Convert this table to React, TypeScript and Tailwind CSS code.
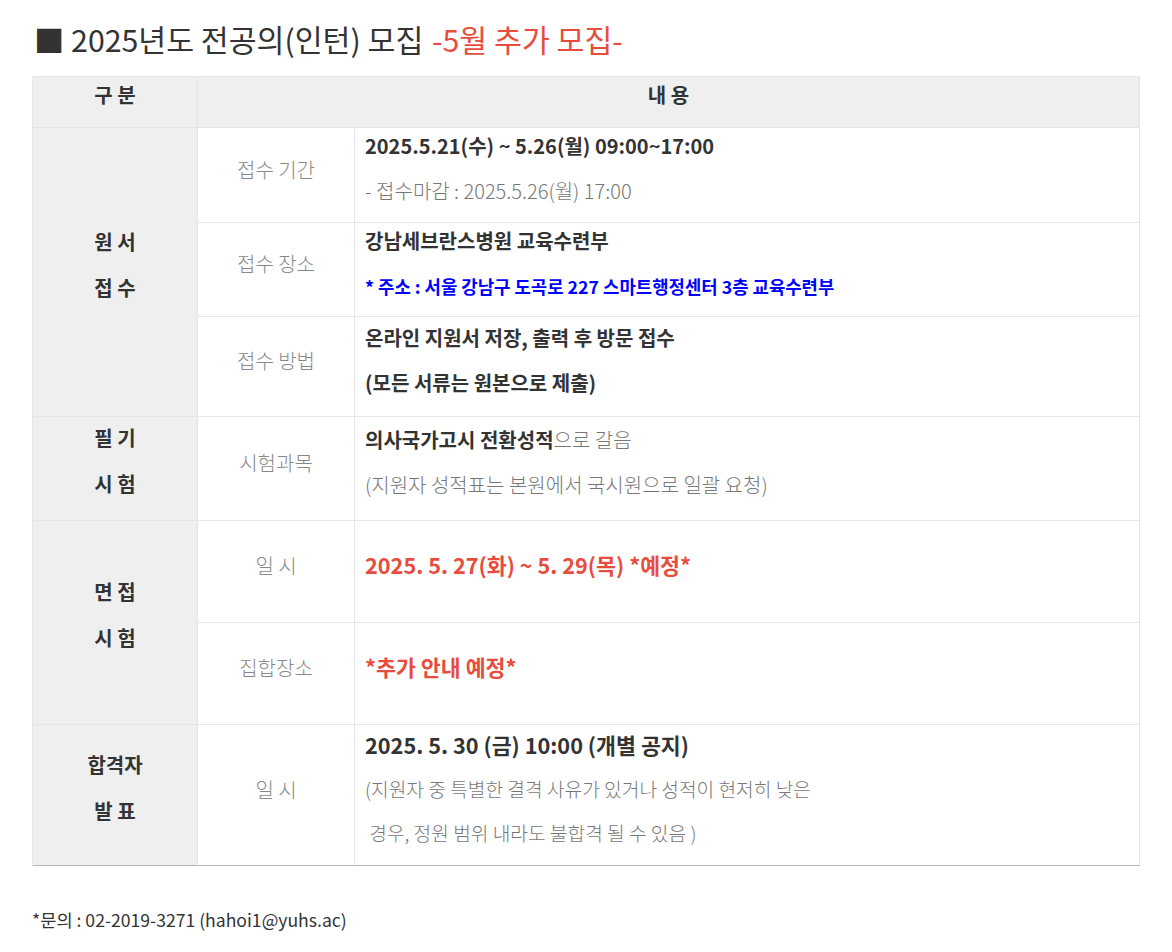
import React from "react"

const font = { fontFamily: '"Noto Sans CJK KR", "Noto Sans", sans-serif' }

function Head({ children, className = "" }: { children: React.ReactNode; className?: string }) {
  return (
    <div
      className={`${className} flex flex-col items-center justify-center pb-[15px] bg-[#efefef] border-r border-b border-[#e4e4e4] text-[20px] font-bold text-[#333] leading-[28px]`}
    >
      {children}
    </div>
  )
}

function Label({ children, last }: { children: React.ReactNode; last?: boolean }) {
  return (
    <div
      className={`flex items-center justify-center pb-[11px] border-r text-[20px] font-light text-[#888] leading-[28px] ${
        last ? "border-b border-b-[#b5b5b5]" : "border-b"
      } border-[#e6e6e6]`}
    >
      {children}
    </div>
  )
}

function Content({ children, last, gap = "gap-[17px]" }: { children: React.ReactNode; last?: boolean; gap?: string }) {
  return (
    <div
      className={`flex flex-col justify-center ${gap} pl-[10px] pb-[13px] border-r text-[20px] leading-[28px] ${
        last ? "border-b border-b-[#b5b5b5]" : "border-b"
      } border-[#e6e6e6]`}
    >
      {children}
    </div>
  )
}

function Group({ lines, span, last }: { lines: string[]; span: string; last?: boolean }) {
  return (
    <div
      className={`${span} flex flex-col items-center justify-center gap-[18px] pb-[15px] bg-[#efefef] border-r text-[20px] font-bold text-[#333] leading-[28px] ${
        last ? "border-b border-b-[#b5b5b5]" : "border-b"
      } border-[#e6e6e6]`}
    >
      {lines.map((l) => (
        <span key={l} className="whitespace-pre">
          {l}
        </span>
      ))}
    </div>
  )
}

export default function App() {
  return (
    <div className="min-h-screen bg-white px-8 pt-[18px]" style={font}>
      {/* 제목 */}
      <h2 className="text-[30.3px] leading-[42px] text-[#333] mb-[16px] pl-[2px]">
        ■ 2025년도 전공의(인턴) 모집 <span className="ml-[2px] text-[#e74c3c]">-5월 추가 모집-</span>
      </h2>

      {/* 모집 안내 표 */}
      <div className="w-[1108px] grid grid-cols-[165px_157px_1fr] grid-rows-[51px_95px_94px_100px_104px_102px_102px_141px] border-t border-l border-[#e6e6e6]">
        <Head>구 분</Head>
        <Head className="col-span-2">내 용</Head>

        <Group span="row-span-3" lines={["원 서", "접 수"]} />
        <Label>접수 기간</Label>
        <Content>
          <p className="font-bold text-[#333]">2025.5.21(수) ~ 5.26(월) 09:00~17:00</p>
          <p className="font-light text-[#777]">- 접수마감 : 2025.5.26(월) 17:00</p>
        </Content>
        <Label>접수 장소</Label>
        <Content>
          <p className="font-bold text-[#333]">강남세브란스병원 교육수련부</p>
          <p className="font-bold text-[17.8px] text-[#0000ff]">* 주소 : 서울 강남구 도곡로 227 스마트행정센터 3층 교육수련부</p>
        </Content>
        <Label>접수 방법</Label>
        <Content>
          <p className="font-bold text-[#333]">온라인 지원서 저장, 출력 후 방문 접수</p>
          <p className="font-bold text-[#333]">(모든 서류는 원본으로 제출)</p>
        </Content>

        <Group span="row-span-1" lines={["필 기", "시 험"]} />
        <Label>시험과목</Label>
        <Content>
          <p>
            <span className="font-bold text-[#333]">의사국가고시 전환성적</span>
            <span className="font-light text-[#777]">으로 갈음</span>
          </p>
          <p className="font-light text-[#777]">(지원자 성적표는 본원에서 국시원으로 일괄 요청)</p>
        </Content>

        <Group span="row-span-2" lines={["면 접", "시 험"]} />
        <Label>일 시</Label>
        <Content>
          <p className="font-bold text-[21.7px] text-[#e74c3c]">2025. 5. 27(화) ~ 5. 29(목) *예정*</p>
        </Content>
        <Label>집합장소</Label>
        <Content>
          <p className="font-bold text-[21.7px] text-[#e74c3c]">*추가 안내 예정*</p>
        </Content>

        <Group span="row-span-1" lines={["합격자", "발 표"]} last />
        <Label last>일 시</Label>
        <Content last gap="gap-4">
          <p className="font-bold text-[21.7px] text-[#333]">2025. 5. 30 (금) 10:00 (개별 공지)</p>
          <p className="font-light text-[19.2px] text-[#777]">(지원자 중 특별한 결격 사유가 있거나 성적이 현저히 낮은</p>
          <p className="font-light text-[19.2px] text-[#777] whitespace-pre"> 경우, 정원 범위 내라도 불합격 될 수 있음 )</p>
        </Content>
      </div>

      <p className="mt-[42px] text-[17.6px] leading-[24px] text-[#333]">*문의 : 02-2019-3271 (hahoi1@yuhs.ac)</p>
    </div>
  )
}
